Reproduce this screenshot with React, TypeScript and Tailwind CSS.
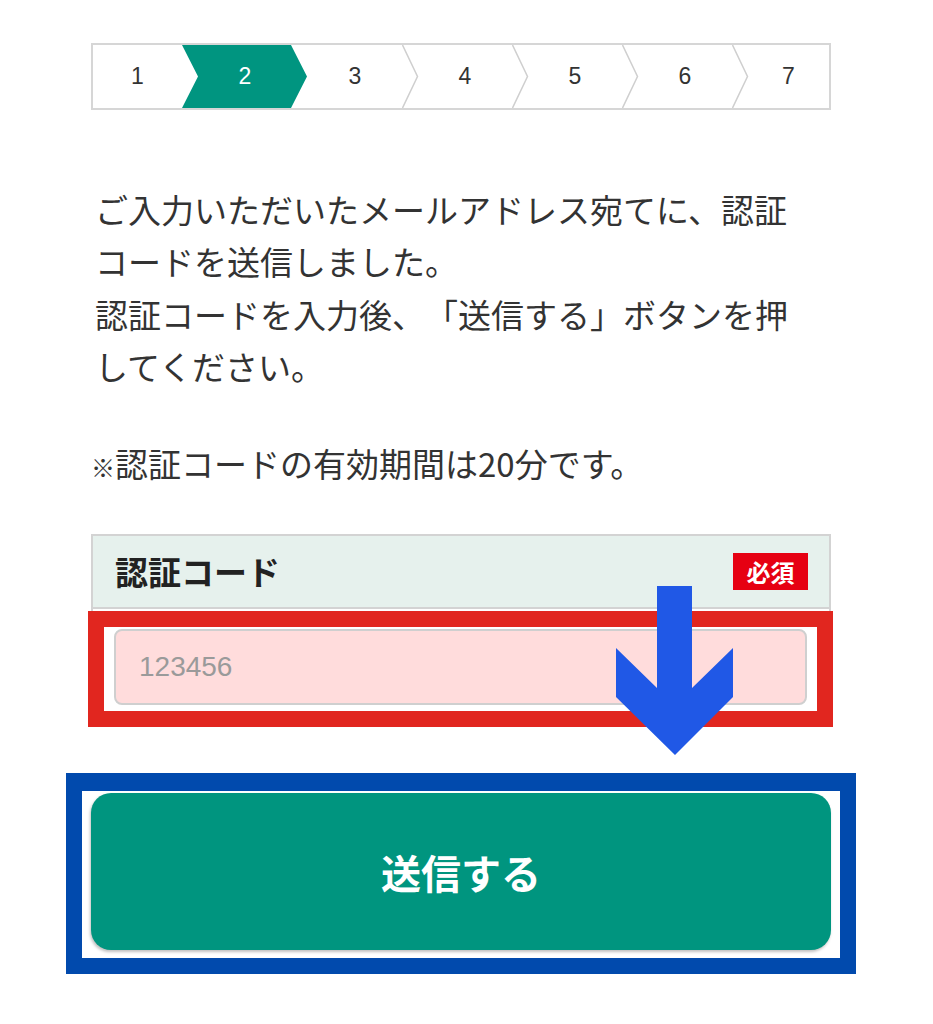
import React from "react";

const steps = ["1", "2", "3", "4", "5", "6", "7"];

function Chevron() {
  return (
    <svg
      className="absolute left-0 top-0 h-full w-[17px]"
      viewBox="0 0 17 63"
      preserveAspectRatio="none"
    >
      <polyline points="0.5,0 15.5,31.5 0.5,63" fill="none" stroke="#cfcfcf" strokeWidth="1.5" />
    </svg>
  );
}

function Stepper() {
  return (
    <div className="flex h-[67px] w-[740px] border-2 border-[#d6d6d6] bg-white font-['Liberation_Sans',Arial,sans-serif] text-[23px] text-[#333]">
      {steps.map((s, i) => {
        const width =
          i === 0 ? "w-[89px]" : i === 6 ? "flex-1" : "w-[110px]";
        const active = i === 1;
        return (
          <div key={s} className={`relative h-full ${width}`}>
            {i >= 3 && <Chevron />}
            {active && (
              <svg
                className="absolute left-0 top-0 z-10 h-full w-[126px]"
                viewBox="0 0 126 63"
                preserveAspectRatio="none"
              >
                <polygon
                  points="0,0 109,0 125,31.5 109,63 0,63 16,31.5"
                  fill="#009580"
                />
              </svg>
            )}
            <div
              className={`relative z-20 flex h-full items-center justify-center ${
                i === 0 ? "" : "pl-[16px]"
              } ${active ? "text-white" : ""}`}
            >
              {s}
            </div>
          </div>
        );
      })}
    </div>
  );
}

export default function App() {
  return (
    <div className="relative h-[1024px] w-[933px] overflow-hidden bg-white font-['Noto_Sans_CJK_JP',sans-serif] [text-spacing-trim:space-all]">
      <div className="ml-[91px] w-[740px] pt-[43px]">
        <Stepper />

        <p className="mt-[73px] pl-[4px] text-[33px] leading-[52.4px] text-[#333]">
          ご入力いただいたメールアドレス宛てに、認証
          <br />
          コードを送信しました。
          <br />
          認証コードを入力後、「送信する」ボタンを押
          <br />
          してください。
        </p>

        <p className="mt-[44px] text-[33px] leading-[52.4px] text-[#333]">
          <span className="text-[24px] font-bold">※</span>
          認証コードの有効期間は20分です。
        </p>

        <div className="relative mt-[41px] w-[740px] border-2 border-[#d3d3d3]">
          <div className="flex h-[73px] items-center justify-between border-b-2 border-[#d3d3d3] bg-[#e6f1ed] pl-[22px] pr-[21px]">
            <span className="text-[33px] font-bold text-[#222]">認証コード</span>
            <span className="flex h-[37px] w-[75px] items-center justify-center bg-[#e60012] text-[24px] font-bold leading-none text-white">
              必須
            </span>
          </div>
          <div className="bg-white pb-[20px] pl-[21px] pr-[22px] pt-[20px]">
            <input
              readOnly
              placeholder="123456"
              className="h-[76px] w-full rounded-lg border-2 border-[#cfcfcf] bg-[#ffdcdc] pl-[23px] font-['Liberation_Sans',Arial,sans-serif] text-[28px] text-[#333] outline-none placeholder:text-[#9a9a9a]"
            />
          </div>
          <div className="pointer-events-none absolute left-[-5px] top-[75px] h-[116px] w-[745px] border-[16px] border-[#e1261f]" />
        </div>

        <div className="-mx-[25px] mt-[46px] border-[16px] border-t-[18px] border-[#014aad] bg-white px-[9px] pb-[8px] pt-[2px]">
          <button className="flex h-[157px] w-full items-center justify-center rounded-[20px] bg-[#00957f] text-[40px] font-bold text-white shadow-[-1px_2px_3px_rgba(0,0,0,0.25)]">
            送信する
          </button>
        </div>
      </div>

      <svg
        className="absolute left-[616px] top-[586px] h-[169px] w-[117px]"
        viewBox="0 0 117 169"
      >
        <polygon
          points="41,0 76,0 76,102 117,62 117,111 59,169 0,111 0,62 41,102"
          fill="#2058e6"
        />
      </svg>
    </div>
  );
}
